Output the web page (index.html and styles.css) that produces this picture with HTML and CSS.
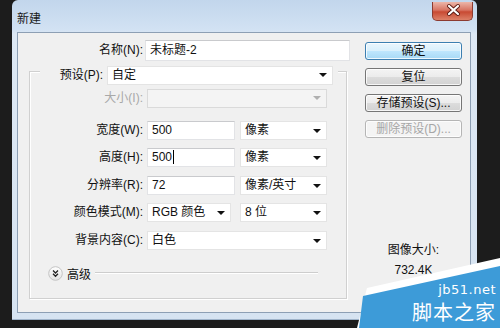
FILE: index.html
```html
<!DOCTYPE html>
<html lang="zh-CN">
<head>
<meta charset="utf-8">
<title>新建</title>
<link rel="stylesheet" href="styles.css">
</head>
<body>
<div class="window">
  <div class="titlebar">
    <span class="title">新建</span>
    <div class="close">
      <svg width="41" height="19" viewBox="0 0 41 19">
        <path d="M16 5 L25 13 M25 5 L16 13" stroke="#5a1a12" stroke-width="4" stroke-linecap="round"/>
        <path d="M16 5 L25 13 M25 5 L16 13" stroke="#fff" stroke-width="2.2" stroke-linecap="round"/>
      </svg>
    </div>
  </div>
  <div class="client">
    <div class="form">
      <div class="name-row">
        <label class="lbl name-lbl">名称(N):</label>
        <div class="input name-input">未标题-2</div>
      </div>
      <div class="group">
        <div class="preset-row">
          <label class="lbl preset-lbl">预设(P):</label>
          <div class="select preset-sel"><span>自定</span><i class="arrow"></i></div>
        </div>
        <div class="row size-row">
          <label class="lbl disabled">大小(I):</label>
          <div class="select wide-sel dis"><span></span><i class="arrow grey"></i></div>
        </div>
        <div class="row r-width">
          <label class="lbl">宽度(W):</label>
          <div class="input num">500</div>
          <div class="select unit"><span>像素</span><i class="arrow"></i></div>
        </div>
        <div class="row r-gap7">
          <label class="lbl">高度(H):</label>
          <div class="input num"><span class="caret">500</span></div>
          <div class="select unit"><span>像素</span><i class="arrow"></i></div>
        </div>
        <div class="row r-gap8">
          <label class="lbl">分辨率(R):</label>
          <div class="input num">72</div>
          <div class="select unit"><span>像素/英寸</span><i class="arrow"></i></div>
        </div>
        <div class="row r-gap7">
          <label class="lbl">颜色模式(M):</label>
          <div class="select mode"><span>RGB 颜色</span><i class="arrow"></i></div>
          <div class="select unit"><span>8 位</span><i class="arrow"></i></div>
        </div>
        <div class="row r-gap8">
          <label class="lbl">背景内容(C):</label>
          <div class="select wide-sel"><span>白色</span><i class="arrow"></i></div>
        </div>
        <div class="adv">
          <svg class="adv-icon" width="15" height="15" viewBox="0 0 15 15">
            <defs>
              <linearGradient id="g" x1="0" y1="0" x2="0" y2="1">
                <stop offset="0" stop-color="#ffffff"/>
                <stop offset="1" stop-color="#e2e2e2"/>
              </linearGradient>
            </defs>
            <circle cx="7.5" cy="7.5" r="6.8" fill="url(#g)" stroke="#c4c4c4" stroke-width="1"/>
            <path d="M5 4.5 L7.5 7 L10 4.5 M5 7.8 L7.5 10.3 L10 7.8" fill="none" stroke="#222" stroke-width="1.3"/>
          </svg>
          <span class="adv-text">高级</span>
          <span class="adv-line"></span>
        </div>
      </div>
    </div>
    <div class="side">
      <button class="btn default">确定</button>
      <button class="btn">复位</button>
      <button class="btn">存储预设(S)...</button>
      <button class="btn disabled-btn">删除预设(D)...</button>
      <div class="imgsize">
        <div>图像大小:</div>
        <div>732.4K</div>
      </div>
    </div>
  </div>
</div>
<div class="watermark">
  <svg width="145" height="70" viewBox="0 0 145 70">
    <polygon points="12,30 145,0 145,70 2,70" fill="#ffffff"/>
    <polygon points="8,38 145,8 145,70 4,70" fill="#3d9bd8"/>
  </svg>
  <span class="wm-url">jb51.net</span>
  <span class="wm-name">脚本之家</span>
</div>
</body>
</html>
```

FILE: styles.css
```css
html, body {
  margin: 0;
  padding: 0;
}
body {
  width: 500px;
  height: 328px;
  overflow: hidden;
  position: relative;
  background: #1c1c1c;
  font-family: "Liberation Sans", "Noto Sans CJK SC", sans-serif;
  font-size: 12px;
  color: #111;
}
.window {
  margin-left: 12px;
  width: 465px;
  height: 320px;
  box-sizing: border-box;
  padding: 0 6px 6px 5px;
  background: linear-gradient(#c2d6ec 0px, #d2e2f3 30px, #dde8f4 34px, #d6e3f1 100%);
  border-radius: 6px 6px 0 0;
  border-bottom: 1px solid #9fb3c9;
  display: flex;
  flex-direction: column;
}
.titlebar {
  height: 32px;
  display: flex;
  justify-content: space-between;
  align-items: flex-start;
}
.title {
  padding-top: 12px;
  line-height: 14px;
  color: #1a1a1a;
}
.close {
  width: 41px;
  height: 19px;
  margin-top: 2px;
  margin-right: -2px;
  border: 1px solid #8c3b30;
  border-top: none;
  box-sizing: border-box;
  border-radius: 0 0 5px 5px;
  background: linear-gradient(#ecb6a9, #d87462 45%, #c84a33 55%, #dc8168);
}
.close svg {
  display: block;
  margin-top: -1px;
}
.client {
  height: 282px;
  box-sizing: border-box;
  background: #f0f0f0;
  border: 1px solid #8d9fb4;
  display: flex;
}
.form {
  width: 332px;
  box-sizing: border-box;
  padding-left: 11px;
}
.lbl {
  text-align: right;
  line-height: 19px;
  white-space: nowrap;
}
.lbl.disabled {
  color: #a8a8a8;
}
.name-row {
  margin-top: 8px;
  height: 20px;
  display: flex;
  align-items: center;
}
.name-lbl {
  width: 114px;
}
.input {
  height: 19px;
  box-sizing: border-box;
  background: #fff;
  border: 1px solid #e2e3e6;
  border-top-color: #c9cacd;
  padding-left: 4px;
  line-height: 17px;
}
.name-input {
  margin-left: 2px;
  width: 205px;
  height: 21px;
  line-height: 19px;
}
.group {
  margin-top: 10px;
  width: 318px;
  height: 228px;
  box-sizing: border-box;
  border: 1px solid #d0d0d0;
  box-shadow: inset 1px 1px 0 #fff, 1px 1px 0 #fff;
}
.preset-row {
  margin-top: -6px;
  margin-left: 10px;
  width: 298px;
  height: 19px;
  background: #f0f0f0;
  display: flex;
  align-items: center;
}
.preset-lbl {
  width: 63px;
}
.preset-sel {
  margin-left: 4px;
  width: 226px;
}
.select {
  height: 19px;
  box-sizing: border-box;
  background: #fff;
  border: 1px solid #e4e4e4;
  display: flex;
  align-items: center;
  justify-content: space-between;
  padding: 0 5px 0 4px;
  line-height: 17px;
}
.select.dis {
  background: #f4f4f4;
  border-color: #dadada;
}
.arrow {
  width: 0;
  height: 0;
  border-left: 4px solid transparent;
  border-right: 4px solid transparent;
  border-top: 4px solid #111;
}
.arrow.grey {
  border-top-color: #b0b0b0;
}
.row {
  height: 20px;
  display: flex;
  align-items: center;
}
.row .lbl {
  width: 113px;
}
.row > .input,
.row > .select:first-of-type {
  margin-left: 4px;
}
.size-row {
  margin-top: 4px;
  height: 19px;
}
.r-width {
  margin-top: 13px;
}
.r-gap7 {
  margin-top: 7px;
}
.r-gap8 {
  margin-top: 8px;
}
.wide-sel {
  width: 180px;
}
.num {
  width: 88px;
}
.unit {
  margin-left: 5px;
  width: 87px;
}
.mode {
  width: 84px;
}
.row > .mode + .unit {
  margin-left: 9px;
}
.caret {
  border-right: 1px solid #000;
  padding-right: 1px;
}
.adv {
  margin-top: 15px;
  margin-left: 18px;
  height: 16px;
  display: flex;
  align-items: center;
}
.adv-icon {
  display: block;
}
.adv-text {
  margin-left: 4px;
  width: 24px;
}
.adv-line {
  margin-left: 4px;
  width: 223px;
  height: 0;
  border-top: 1px solid #cdcdcd;
  border-bottom: 1px solid #fff;
  margin-top: -2px;
}
.side {
  margin-left: 15px;
  width: 97px;
  padding-top: 9px;
  display: flex;
  flex-direction: column;
  gap: 8px;
}
.btn {
  height: 18px;
  width: 97px;
  padding: 0;
  margin: 0;
  font-family: inherit;
  font-size: 12px;
  line-height: 16px;
  color: #111;
  border: 1px solid #767676;
  border-radius: 3px;
  background: linear-gradient(#f4f4f4, #ececec 48%, #dcdcdc 52%, #d2d2d2);
  box-shadow: inset 0 0 0 1px rgba(255,255,255,0.8);
}
.btn.default {
  border-color: #3c7fb1;
  background: linear-gradient(#eaf6fd, #d9f0fc 48%, #bee6fd 52%, #a7d9f5);
}
.btn.disabled-btn {
  color: #a6a6a6;
  border-color: #b5b5b5;
  background: #f4f4f4;
}
.imgsize {
  margin-top: 94px;
  text-align: center;
  line-height: 20px;
  color: #111;
}
.watermark {
  position: absolute;
  left: 355px;
  top: 258px;
  width: 145px;
  height: 70px;
}
.watermark svg {
  display: block;
}
.wm-url {
  position: absolute;
  right: 4px;
  top: 24px;
  color: #fff;
  font-family: "DejaVu Sans", sans-serif;
  font-size: 13px;
  line-height: 15px;
  letter-spacing: 0.5px;
}
.wm-name {
  position: absolute;
  right: 4px;
  top: 42px;
  color: #fff;
  font-family: "Noto Sans CJK SC", sans-serif;
  font-size: 20px;
  line-height: 24px;
  letter-spacing: 1px;
}
```
